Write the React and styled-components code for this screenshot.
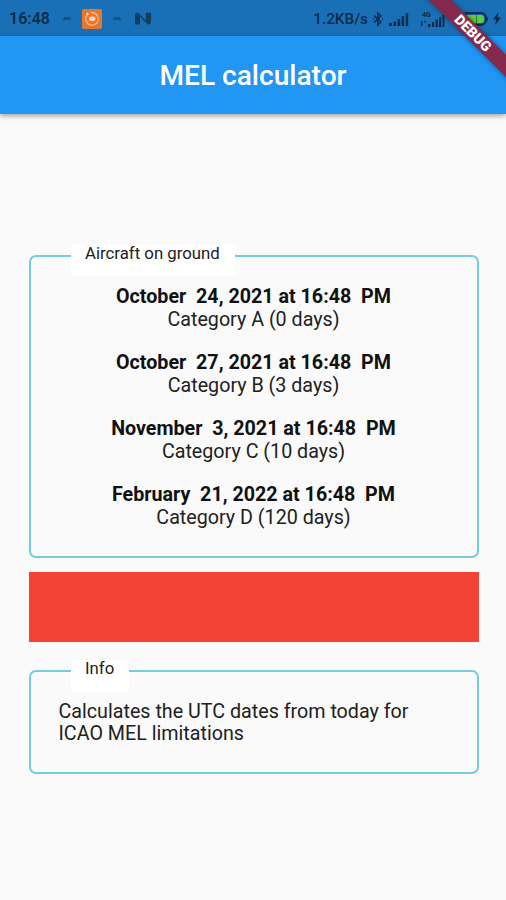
import React from "react";
import styled, { createGlobalStyle } from "styled-components";

const limits = [
  { date: "October  24, 2021 at 16:48  PM", category: "Category A (0 days)" },
  { date: "October  27, 2021 at 16:48  PM", category: "Category B (3 days)" },
  { date: "November  3, 2021 at 16:48  PM", category: "Category C (10 days)" },
  { date: "February  21, 2022 at 16:48  PM", category: "Category D (120 days)" },
];

const ink = "#0b2c4b";

function Bluetooth() {
  return (
    <svg width="12" height="16" viewBox="0 0 12 16" fill="none" stroke={ink} strokeWidth="1.5">
      <path d="M2 4.5 9 11 5.8 14V2L9 5 2 11.5" />
      <path d="M1 8h1M10 8h1" />
    </svg>
  );
}

function Signal() {
  return (
    <svg width="20" height="14" viewBox="0 0 20 14" fill={ink}>
      <path d="M0 11h3v3H0zM4.5 9.5h2.6V14H4.5zM8.6 7h2.6v7H8.6zM12.6 4h2.6v10h-2.6zM16.8 1h2.4v13h-2.4z" />
    </svg>
  );
}

function MobileSignal() {
  return (
    <svg width="26" height="18" viewBox="0 0 26 18" fill={ink}>
      <text x="2" y="6.5" fontFamily="Roboto, sans-serif" fontSize="7" fontWeight="700">
        4G
      </text>
      <path d="M1 11h1.4v5H1zM4 11h2v1.5H4zM8 14h2.5v3H8zM12 12h2.2v5H12zM15.6 9.5h2.2V17h-2.2zM19 7h2.2v10H19zM22.5 4.5h2V17h-2z" />
    </svg>
  );
}

function Battery() {
  return (
    <svg width="28" height="14" viewBox="0 0 28 14">
      <rect x="1" y="1" width="24" height="12" rx="5" fill="#175f9c" stroke={ink} strokeWidth="1.8" />
      <rect x="3" y="3" width="20" height="8" rx="3" fill="#5bd03c" />
      <path d="M15.5 3v8" stroke="#327b53" />
      <path d="M26 5c1.5.5 1.5 3.5 0 4z" fill={ink} />
    </svg>
  );
}

function App() {
  return (
    <>
      <GlobalStyle />
      <Screen>
        <StatusBar>
          <span>16:48</span>
          <Dash $left={13} $right={11} />
          <svg width="20" height="20" viewBox="0 0 20 20">
            <rect width="20" height="20" rx="2" fill="#e8762d" />
            <path d="M5 6a6.3 6.3 0 1 0 4-2.4" fill="none" stroke="#f6b98b" strokeWidth="1.3" />
            <circle cx="5.5" cy="5" r="1.2" fill="#f9d3b2" />
            <rect x="7" y="7.5" width="6.5" height="4.5" rx="2" fill="#f9d3b2" />
          </svg>
          <Dash $left={11} $right={14} />
          <svg width="16" height="13" viewBox="0 0 16 13" fill="#123f5f">
            <path d="M0 12.5V3C0 .8 2.4 0 4 1.6l6.8 7V.8H16V10c0 2.4-2.6 3.2-4.2 1.5L5 4.8v7.7z" />
          </svg>
          <StatusRight>
            <span>1.2KB/s</span>
            <IconSlot $left={4}>
              <Bluetooth />
            </IconSlot>
            <IconSlot $left={5}>
              <Signal />
            </IconSlot>
            <IconSlot $left={11}>
              <MobileSignal />
            </IconSlot>
            <IconSlot $left={15}>
              <Battery />
            </IconSlot>
            <IconSlot $left={4}>
              <svg width="8" height="13" viewBox="0 0 8 13" fill={ink}>
                <path d="M5.5 0 0 7.5h3L2.2 13 8 5.5H4.6z" />
              </svg>
            </IconSlot>
          </StatusRight>
        </StatusBar>
        <AppBar>MEL calculator</AppBar>
        <Content>
          <Card>
            <Legend>Aircraft on ground</Legend>
            <LimitList>
              {limits.map((item) => (
                <li key={item.category}>
                  <b>{item.date}</b>
                  <span>{item.category}</span>
                </li>
              ))}
            </LimitList>
          </Card>
          <RedBox />
          <Card>
            <Legend>Info</Legend>
            <Info>Calculates the UTC dates from today for ICAO MEL limitations</Info>
          </Card>
        </Content>
        <DebugBanner>DEBUG</DebugBanner>
      </Screen>
    </>
  );
}

const GlobalStyle = createGlobalStyle`
  body {
    margin: 0;
    background-color: #fafafa;
    font-family: Roboto, sans-serif;
  }
`;

const Screen = styled.div`
  position: relative;
  height: 900px;
  box-sizing: border-box;
  overflow: hidden;
  background-color: #fafafa;
  color: #212121;
`;

const StatusBar = styled.div`
  display: flex;
  align-items: center;
  height: 36px;
  box-sizing: border-box;
  padding: 1px 5px 0 9px;
  background-color: #1a70b7;
  color: ${ink};
  font-size: 16px;
  font-weight: 600;
  white-space: nowrap;
`;

const Dash = styled.i`
  width: 8px;
  height: 3px;
  margin: 0 ${(props) => props.$right}px 0 ${(props) => props.$left}px;
  border-radius: 3px 3px 0 0;
  background-color: #15507f;
`;

const StatusRight = styled.div`
  display: flex;
  align-items: center;
  margin-left: auto;
  font-size: 15.3px;
  font-weight: 500;
`;

const IconSlot = styled.span`
  display: flex;
  flex: none;
  margin-left: ${(props) => props.$left}px;
`;

const AppBar = styled.header`
  display: flex;
  align-items: center;
  justify-content: center;
  height: 78px;
  background-color: #2196f3;
  box-shadow: 0 2px 5px rgba(0, 0, 0, 0.35);
  color: #fff;
  font-size: 28.1px;
  font-weight: 500;
`;

const Content = styled.main`
  display: flex;
  flex-direction: column;
  padding: 141px 27.5px 0 28.5px;
`;

const Card = styled.section`
  display: flex;
  flex-direction: column;
  padding: 0 28px 27.5px;
  border: 2px solid #75ccdc;
  border-radius: 7px;
`;

const Legend = styled.div`
  align-self: flex-start;
  height: 31px;
  box-sizing: border-box;
  margin: -12px 0 10px 12.5px;
  padding: 0 15px 0 14px;
  background-color: #fff;
  font-size: 16.8px;
  line-height: 16px;
`;

const LimitList = styled.ul`
  margin: 0 0 -1px;
  padding: 0;
  display: flex;
  flex-direction: column;
  gap: 21px;
  list-style: none;
  text-align: center;
  font-size: 19.7px;
  line-height: 22px;

  b,
  span {
    display: block;
    white-space: pre;
  }

  b {
    margin-bottom: 1px;
    color: #111;
    font-weight: 700;
  }
`;

const RedBox = styled.div`
  height: 70px;
  margin: 14px 0 28px;
  background-color: #f44336;
`;

const Info = styled.p`
  margin: 0;
  font-size: 19.7px;
  line-height: 22px;
`;

/* ribbon laid across the top right corner */
const DebugBanner = styled.div`
  position: absolute;
  top: 25px;
  left: 393px;
  width: 160px;
  height: 16px;
  transform: rotate(45deg);
  background-color: #84294c;
  box-shadow: 0 0 5px rgba(0, 0, 0, 0.4);
  color: #fff;
  font-size: 14.2px;
  font-weight: 900;
  line-height: 16px;
  text-align: center;
`;

export default App;
